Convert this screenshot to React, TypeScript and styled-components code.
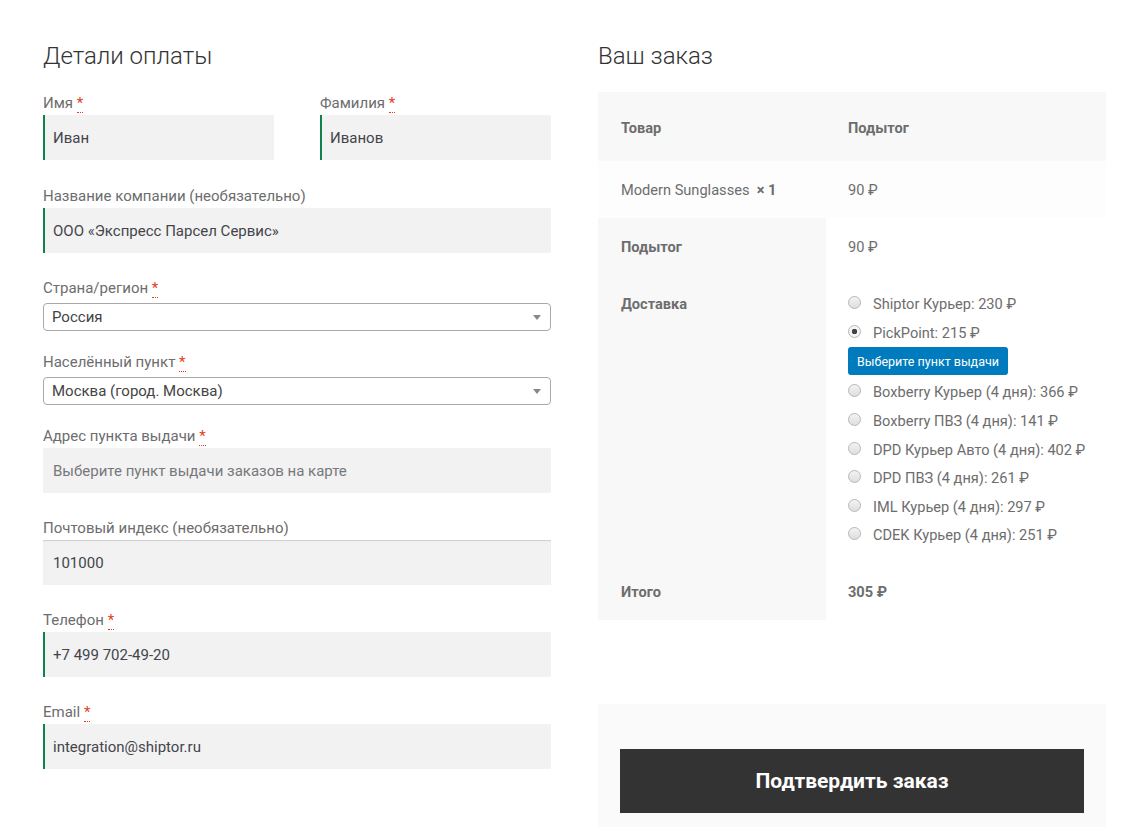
import styled, { createGlobalStyle } from "styled-components";

const GlobalStyle = createGlobalStyle`
  body {
    margin: 0;
    background: #ffffff;
    font-family: Roboto, "Noto Sans", sans-serif;
    color: #6d6d6d;
  }
`;

type Field = {
  label: string;
  value?: string;
  placeholder?: string;
  required?: boolean;
  valid?: boolean;
  shadow?: boolean;
};

const shipping = [
  { name: "Shiptor Курьер: 230 ₽", checked: false },
  { name: "PickPoint: 215 ₽", checked: true, pick: true },
  { name: "Boxberry Курьер (4 дня): 366 ₽", checked: false },
  { name: "Boxberry ПВЗ (4 дня): 141 ₽", checked: false },
  { name: "DPD Курьер Авто (4 дня): 402 ₽", checked: false },
  { name: "DPD ПВЗ (4 дня): 261 ₽", checked: false },
  { name: "IML Курьер (4 дня): 297 ₽", checked: false },
  { name: "CDEK Курьер (4 дня): 251 ₽", checked: false },
];

const Required = () => <Star title="обязательно">*</Star>;

const TextField: React.FC<Field> = ({ label, value, placeholder, required, valid, shadow }) => (
  <FieldRow>
    <Label>
      {label}
      {required && <> <Required /></>}
    </Label>
    <Input $valid={valid} $shadow={shadow} $placeholder={!value}>
      {value || placeholder}
    </Input>
  </FieldRow>
);

const SelectField: React.FC<{ label: string; value: string }> = ({ label, value }) => (
  <FieldRow $tight>
    <Label>
      {label} <Required />
    </Label>
    <Select>
      <span>{value}</span>
      <Arrow />
    </Select>
  </FieldRow>
);

const App: React.FC = () => {
  return (
    <>
      <GlobalStyle />
      <Page>
        <Column>
          <Title>Детали оплаты</Title>
          <NameRow>
            <TextField label="Имя" value="Иван" required valid />
            <TextField label="Фамилия" value="Иванов" required valid />
          </NameRow>
          <TextField label="Название компании (необязательно)" value="ООО «Экспресс Парсел Сервис»" valid />
          <SelectField label="Страна/регион" value="Россия" />
          <SelectField label="Населённый пункт" value="Москва (город. Москва)" />
          <TextField label="Адрес пункта выдачи" placeholder="Выберите пункт выдачи заказов на карте" required />
          <TextField label="Почтовый индекс (необязательно)" value="101000" shadow />
          <TextField label="Телефон" value="+7 499 702-49-20" required valid />
          <TextField label="Email" value="integration@shiptor.ru" required valid />
        </Column>

        <Column>
          <Title>Ваш заказ</Title>
          <OrderTable>
            <colgroup>
              <LabelCol />
              <col />
            </colgroup>
            <thead>
              <HeadRow>
                <HeadCell>Товар</HeadCell>
                <HeadCell>Подытог</HeadCell>
              </HeadRow>
            </thead>
            <tbody>
              <ItemRow>
                <Cell>
                  Modern Sunglasses&nbsp; <strong>× 1</strong>
                </Cell>
                <Cell>90 ₽</Cell>
              </ItemRow>
            </tbody>
            <tfoot>
              <tr>
                <SideCell>Подытог</SideCell>
                <Cell>90 ₽</Cell>
              </tr>
              <tr>
                <SideCell>Доставка</SideCell>
                <ShippingCell>
                  <ShippingList>
                    {shipping.map((s) => (
                      <li key={s.name}>
                        <Option>
                          <Radio $checked={s.checked} />
                          {s.name}
                        </Option>
                        {s.pick && <PickButton>Выберите пункт выдачи</PickButton>}
                      </li>
                    ))}
                  </ShippingList>
                </ShippingCell>
              </tr>
              <tr>
                <SideCell>Итого</SideCell>
                <Cell>
                  <strong>305 ₽</strong>
                </Cell>
              </tr>
            </tfoot>
          </OrderTable>

          <Payment>
            <PlaceOrder>Подтвердить заказ</PlaceOrder>
          </Payment>
        </Column>
      </Page>
    </>
  );
};

export default App;

const Page = styled.div`
  display: grid;
  grid-template-columns: 508px 508px;
  column-gap: 47px;
  padding: 39px 0 0 43px;
  min-height: 827px;
  box-sizing: border-box;
  overflow: hidden;
`;

const Column = styled.div`
  display: flex;
  flex-direction: column;
`;

const Title = styled.h3`
  margin: 0 0 18px;
  font-size: 24px;
  line-height: 34px;
  font-weight: 300;
  color: #333333;
`;

const NameRow = styled.div`
  display: grid;
  grid-template-columns: 1fr 1fr;
  column-gap: 46px;
  margin-bottom: 1px;
`;

const FieldRow = styled.div<{ $tight?: boolean }>`
  display: flex;
  flex-direction: column;
  margin-bottom: ${(p) => (p.$tight ? "19px" : "23px")};
`;

const Label = styled.label`
  font-size: 15px;
  line-height: 24px;
  color: #6d6d6d;
  white-space: nowrap;
`;

const Star = styled.abbr`
  color: #e2401c;
  text-decoration: none;
  border-bottom: 1px dotted #e2401c;
  cursor: help;
`;

const Input = styled.div<{ $valid?: boolean; $shadow?: boolean; $placeholder?: boolean }>`
  height: 45px;
  box-sizing: border-box;
  display: flex;
  align-items: center;
  padding-left: ${(p) => (p.$valid ? "8px" : "10px")};
  background: #f2f2f2;
  border-left: ${(p) => (p.$valid ? "2px solid #0f834d" : "none")};
  box-shadow: ${(p) => (p.$shadow ? "inset 0 1px 1px rgba(0, 0, 0, 0.15)" : "none")};
  color: ${(p) => (p.$placeholder ? "#77787b" : "#43454b")};
  font-size: 15px;
  white-space: nowrap;
`;

const Select = styled.div`
  margin-top: 3px;
  height: 28px;
  box-sizing: border-box;
  display: flex;
  align-items: center;
  justify-content: space-between;
  padding: 0 9px 0 8px;
  background: #ffffff;
  border: 1px solid #aaaaaa;
  border-radius: 4px;
  color: #444444;
  font-size: 15px;
`;

const Arrow = styled.span`
  width: 0;
  height: 0;
  border-left: 4px solid transparent;
  border-right: 4px solid transparent;
  border-top: 5px solid #888888;
`;

const OrderTable = styled.table`
  width: 508px;
  margin-top: 1px;
  table-layout: fixed;
  border-collapse: collapse;
  border-spacing: 0;
  font-size: 14.6px;
  line-height: 24px;
  color: #6d6d6d;
  white-space: nowrap;

  strong {
    font-weight: 700;
  }
`;

const LabelCol = styled.col`
  width: 228px;
`;

const HeadRow = styled.tr`
  background: #f8f8f8;
`;

const HeadCell = styled.th`
  text-align: left;
  font-weight: 700;
  padding: 24px 22px 21px 22px;

  &:first-child {
    padding-left: 23px;
  }
`;

const ItemRow = styled.tr`
  background: #fdfdfd;
`;

const Cell = styled.td`
  padding: 17px 22px 16px 22px;
  vertical-align: top;

  &:first-child {
    padding-left: 23px;
  }
`;

const SideCell = styled.th`
  text-align: left;
  font-weight: 700;
  background: #f8f8f8;
  padding: 17px 22px 16px 23px;
  vertical-align: top;
`;

const ShippingCell = styled.td`
  padding: 15px 22px 13px 22px;
  vertical-align: top;
`;

const ShippingList = styled.ul`
  list-style: none;
  margin: 0;
  padding: 0;
`;

const Option = styled.div`
  display: flex;
  align-items: center;
  height: 28.6px;
  gap: 12px;
`;

const Radio = styled.span<{ $checked?: boolean }>`
  width: 13px;
  height: 13px;
  box-sizing: border-box;
  border-radius: 50%;
  border: 1px solid #b8b8b8;
  margin-top: -3px;
  background: ${(p) =>
    p.$checked
      ? "radial-gradient(circle, #444 0 2.5px, #f4f4f4 3px)"
      : "linear-gradient(#f3f3f3, #dedede)"};
  flex: none;
`;

const PickButton = styled.button`
  display: block;
  height: 28px;
  width: 160px;
  margin-bottom: 3px;
  padding: 0;
  border: none;
  border-radius: 3px;
  background: #007bbd;
  color: #ffffff;
  font-family: inherit;
  font-size: 12.5px;
  cursor: pointer;
`;

const Payment = styled.div`
  margin-top: 84px;
  background: #fafafa;
  padding: 45px 22px 40px;
`;

const PlaceOrder = styled.button`
  display: block;
  width: 100%;
  height: 64px;
  border: none;
  background: #333333;
  color: #ffffff;
  font-family: inherit;
  font-size: 21px;
  font-weight: 700;
  cursor: pointer;
`;
